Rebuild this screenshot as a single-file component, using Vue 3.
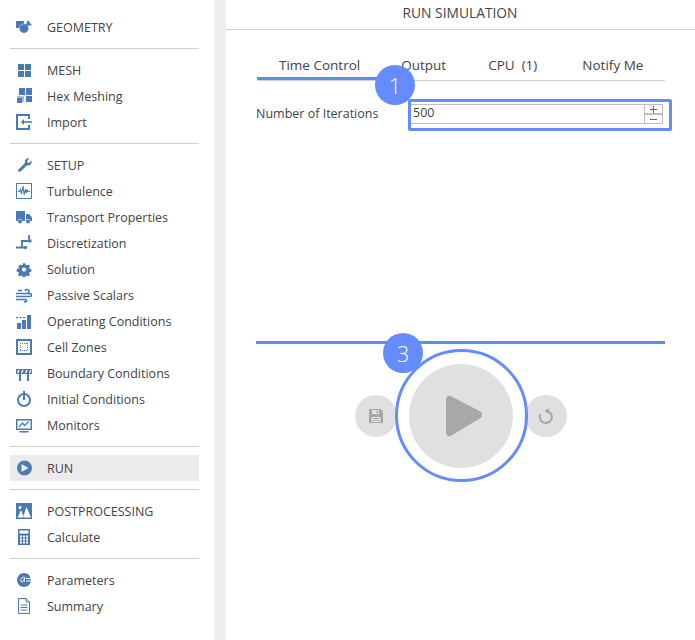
<script setup>
const sections = [
  [{ label: 'GEOMETRY', icon: 'geometry' }],
  [
    { label: 'MESH', icon: 'mesh' },
    { label: 'Hex Meshing', icon: 'hex' },
    { label: 'Import', icon: 'import' }
  ],
  [
    { label: 'SETUP', icon: 'wrench' },
    { label: 'Turbulence', icon: 'turbulence' },
    { label: 'Transport Properties', icon: 'truck' },
    { label: 'Discretization', icon: 'discretization' },
    { label: 'Solution', icon: 'gear' },
    { label: 'Passive Scalars', icon: 'wind' },
    { label: 'Operating Conditions', icon: 'operating' },
    { label: 'Cell Zones', icon: 'cells' },
    { label: 'Boundary Conditions', icon: 'barrier' },
    { label: 'Initial Conditions', icon: 'timer' },
    { label: 'Monitors', icon: 'monitor' }
  ],
  [{ label: 'RUN', icon: 'run', active: true }],
  [
    { label: 'POSTPROCESSING', icon: 'post' },
    { label: 'Calculate', icon: 'calc' }
  ],
  [
    { label: 'Parameters', icon: 'params' },
    { label: 'Summary', icon: 'summary' }
  ]
]

const tabs = ['Time Control', 'Output', 'CPU\u00a0 (1)', 'Notify Me']
</script>

<template>
<div class="app">
  <aside class="sidebar">
    <div v-for="(section, i) in sections" :key="i" class="section">
      <div
        v-for="item in section"
        :key="item.label"
        class="item"
        :class="{ 'item-active': item.active }"
      >
        <svg class="item-icon" viewBox="0 0 16 16" fill="#4a7ab5">
          <template v-if="item.icon === 'geometry'">
            <rect x="0" y="2" width="8" height="7" />
            <circle cx="8" cy="9.500" r="4.700" stroke="#fff" stroke-width=".4" />
            <path d="M12 1l4 5.500H9.500z" />
          </template>
          <template v-else-if="item.icon === 'mesh'">
            <rect x="2" y="2" width="6" height="6" />
            <rect x="9" y="2" width="6" height="6" />
            <rect x="2" y="9" width="6" height="6" />
            <rect x="9" y="9" width="6" height="6" />
          </template>
          <template v-else-if="item.icon === 'hex'">
            <rect x="3" y="0" width="6" height="7" />
            <rect x="10" y="0" width="6" height="7" />
            <rect x="10" y="8" width="6" height="6" />
            <rect x="1" y="10" width="5" height="5" />
            <path d="M1 8.500h6.500V14H6.500V9.500H1z" />
          </template>
          <template v-else-if="item.icon === 'import'">
            <path d="M0 0h14v5h-2V2H2v12h10v-3h2v5H0z" />
            <path d="M16 7.200H8V5L5 8l3 3V8.800h8z" />
          </template>
          <template v-else-if="item.icon === 'wrench'">
            <path d="M15 2.500 12.500 5 11 4.500 10.500 3 13 .500C10.800-.2 8.500 1.200 8.300 3.500c0 .6 0 1.100.2 1.600L2 11.500c-1.200 1.200.6 3.200 2 2l6.500-6.300c2.700.9 5.400-1.800 4.500-4.700z" transform="translate(.5 1)" />
          </template>
          <template v-else-if="item.icon === 'turbulence'">
            <path d="M0 0h16v16H0zm1 1v14h14V1z" fill-rule="evenodd" />
            <path d="M2 8.500h1.500l1-2 1 4.500 1.500-8 1.200 9 1.300-6 .8 4 .9-3 .8 1.500H14" fill="none" stroke="#4a7ab5" stroke-width="1.100" />
          </template>
          <template v-else-if="item.icon === 'truck'">
            <path d="M0 3a1 1 0 0 1 1-1h8v10H0zM10 5h3l3 3.500V12h-6z" />
            <circle cx="4" cy="12.500" r="2.300" stroke="#fff" stroke-width=".6" />
            <circle cx="12" cy="12.500" r="2.300" stroke="#fff" stroke-width=".6" />
          </template>
          <template v-else-if="item.icon === 'discretization'">
            <path d="M13 0v6H6v6.500H0" fill="none" stroke="#4a7ab5" stroke-width="1.800" />
            <circle cx="14" cy="6" r="1.700" />
            <circle cx="6" cy="6" r="1.300" />
            <circle cx="9.500" cy="12.500" r="1.700" />
            <path d="M6 12.500h3" stroke="#4a7ab5" stroke-width="1.800" />
          </template>
          <template v-else-if="item.icon === 'gear'">
            <path d="M6.500 1h3l.4 2 1.400.6 1.800-1.100 2 2-1.100 1.800.6 1.400 2 .4v3l-2 .4-.6 1.400 1.100 1.800-2 2-1.800-1.100-1.400.6-.4 2h-3l-.4-2-1.400-.6-1.800 1.100-2-2 1.100-1.800-.6-1.400-2-.4v-3l2-.4.6-1.400L1.400 4.500l2-2 1.800 1.100 1.400-.6zM8 6a2.500 2.500 0 1 0 0 5 2.500 2.500 0 0 0 0-5z" fill-rule="evenodd" transform="translate(1.200 1.300) scale(.85)" />
          </template>
          <template v-else-if="item.icon === 'wind'">
            <path d="M0 6.500h11a2 2 0 1 0-2-2.500M0 9.500h14a1.500 1.500 0 1 0-1.500-2M0 12.500h9.500a1.200 1.200 0 1 1-1.200 1.500M2 3.500h4" fill="none" stroke="#4a7ab5" stroke-width="1.700" />
          </template>
          <template v-else-if="item.icon === 'operating'">
            <path d="M0 4h2v1.300H0zM3.500 4h2v1.300h-2zM7 4h2v1.300H7z" />
            <rect x="1" y="10" width="4" height="6" />
            <rect x="6" y="7" width="4" height="9" />
            <rect x="11" y="2" width="4" height="14" />
          </template>
          <template v-else-if="item.icon === 'cells'">
            <path d="M0 0h16v16H0zm2 2v12h12V2z" fill-rule="evenodd" />
            <path d="M4 4.500h8M4 11.500h8M4.500 4v8M11.500 4v8" fill="none" stroke="#4a7ab5" stroke-width="1" stroke-dasharray="1 1" />
          </template>
          <template v-else-if="item.icon === 'barrier'">
            <path d="M0 4h16v5H0z" />
            <path d="M3 5 1.500 8M7 5 5.500 8M11 5 9.500 8M15 5l-1.500 3" stroke="#fff" stroke-width="1.300" fill="none" />
            <rect x="3" y="9" width="2" height="7" />
            <rect x="11" y="9" width="2" height="7" />
          </template>
          <template v-else-if="item.icon === 'timer'">
            <circle cx="8" cy="9" r="6" fill="none" stroke="#4a7ab5" stroke-width="2" />
            <rect x="7" y="0" width="2" height="9" />
          </template>
          <template v-else-if="item.icon === 'monitor'">
            <path d="M0 2h16v11H0zm1.500 1.500v8h13v-8z" fill-rule="evenodd" />
            <path d="M3 10 6.500 6l2 2.500L13 4.500" fill="none" stroke="#4a7ab5" stroke-width="1.300" />
            <rect x="3.500" y="14" width="9" height="1.500" />
          </template>
          <template v-else-if="item.icon === 'run'">
            <path d="M8.500 .500a7.500 7.500 0 1 1 0 15 7.500 7.500 0 0 1 0-15zM5.500 4v8L12.500 8z" fill-rule="evenodd" />
          </template>
          <template v-else-if="item.icon === 'post'">
            <path d="M0 0h16v16H0zm4 3a1.500 1.500 0 1 0 0 3 1.500 1.500 0 0 0 0-3zM1.500 14.500h6.500L5 7zm5.500 0h8L10.500 4z" fill-rule="evenodd" />
          </template>
          <template v-else-if="item.icon === 'calc'">
            <path d="M2 0h12v16H2zm1.500 1.500v3h9v-3zM4 6.500v2h2v-2zm3 0v2h2v-2zm3 0v2h2v-2zM4 9.500v2h2v-2zm3 0v2h2v-2zm3 0v2h2v-2zm-6 3v2h2v-2zm3 0v2h2v-2zm3 0v2h2v-2z" fill-rule="evenodd" />
          </template>
          <template v-else-if="item.icon === 'params'">
            <circle cx="8" cy="8" r="7" />
            <path d="M8.700 5.500c-3-1.500-4.800 3-3.300 4.500 1.200.8 2.500-1 3.300-4.500-.5 2-.8 4 0 4.500" fill="none" stroke="#fff" stroke-width="1" />
            <path d="M10 6.500h6M10 9h6" stroke="#fff" stroke-width="1" />
          </template>
          <template v-else-if="item.icon === 'summary'">
            <path d="M2.500 .500H10l3.500 3.500v11.500h-11zM10 .500V4h3.500" fill="none" stroke="#4a7ab5" stroke-width="1" />
            <path d="M4.500 7h7M4.500 9.500h7M4.500 12h7" stroke="#4a7ab5" stroke-width="1" />
          </template>
        </svg>
        <span>{{ item.label }}</span>
      </div>
    </div>
  </aside>

  <div class="gutter"></div>

  <main class="main">
    <header class="title">RUN SIMULATION</header>
    <div class="content">
      <div class="tabs">
        <div
          v-for="(tab, i) in tabs"
          :key="tab"
          class="tab"
          :class="{ 'tab-active': i === 0, 'tab-last': i === tabs.length - 1 }"
        >{{ tab }}</div>
        <div class="badge badge-one">1</div>
      </div>
      <div class="field">
        <label>Number of Iterations</label>
        <div class="input">
          <span class="input-value">500</span>
          <div class="spinner">
            <div class="spin-cell">
              <svg viewBox="0 0 7 7" width="7" height="7"><path d="M0 3.500h7M3.500 0v7" stroke="#666" stroke-width="1" /></svg>
            </div>
            <div class="spin-cell">
              <svg viewBox="0 0 7 7" width="7" height="7"><path d="M0 3.500h7" stroke="#666" stroke-width="1" /></svg>
            </div>
          </div>
          <div class="highlight"></div>
        </div>
      </div>
      <div class="actions">
        <div class="badge badge-three">3</div>
        <div class="buttons">
          <button class="round-btn">
            <svg viewBox="0 0 16 16" width="16" height="16" fill="#a8a8a8">
              <path d="M1 1h11.500L15 3.500V15H1zM4 2v4h7V2zm4.500.700h1.500v2.500H8.500zM3.500 9v5h9V9zm1.300 1.300h6.400v.8H4.800zm0 1.700h6.400v.8H4.800z" fill-rule="evenodd" />
            </svg>
          </button>
          <div class="play-wrap">
            <button class="play-btn">
              <svg viewBox="0 0 38 42" width="38" height="42" fill="#a8a8a8">
                <path d="M1 4.500C1 1.500 3.500 0 6 1.200l29 15c2.800 1.500 2.800 5.500 0 7L6 40.800C3.500 42 1 40.500 1 37.500z" />
              </svg>
            </button>
          </div>
          <button class="round-btn">
            <svg viewBox="0 0 16 16" width="16" height="16" fill="none">
              <path d="M2.600 6A6 6 0 1 0 9.500 3.200" stroke="#a8a8a8" stroke-width="2" />
              <path d="M11 0v6L6.500 3z" fill="#a8a8a8" />
            </svg>
          </button>
        </div>
      </div>
    </div>
  </main>
</div>
</template>

<style>
html, body {
  margin: 0;
  background: #fff;
}
</style>

<style scoped>
.app {
  display: flex;
  height: 640px;
  font-family: "Open Sans", sans-serif;
  font-size: 12.5px;
  color: #444;
}

.sidebar {
  width: 214px;
  box-sizing: border-box;
  padding: 14px 15px 0 10px;
  flex-shrink: 0;
}
.section {
  padding-bottom: 8px;
  margin-bottom: 8px;
  border-bottom: 1px solid #cfcfcf;
}
.section:last-child {
  border-bottom: 0;
}
.item {
  display: flex;
  align-items: center;
  height: 26px;
  padding-left: 6px;
}
.item-active {
  background-color: #ebebeb;
}
.item-icon {
  width: 16px;
  height: 16px;
  margin-right: 15px;
  flex-shrink: 0;
}

.gutter {
  width: 12px;
  background-color: #efefef;
  flex-shrink: 0;
}

.main {
  flex: 1;
  display: flex;
  flex-direction: column;
}
.title {
  height: 29px;
  border-bottom: 1px solid #cfcfcf;
  text-align: center;
  font-size: 13.8px;
  line-height: 26px;
  padding-right: 1px;
}
.content {
  padding: 20px 30px 0;
}

.tabs {
  position: relative;
  display: flex;
  height: 30px;
  width: 408px;
  margin-left: 1px;
  border-bottom: 1px solid #cfcfcf;
}
.tab {
  padding: 6px 21px 0;
  font-size: 13.5px;
  line-height: 18px;
  white-space: nowrap;
  box-sizing: border-box;
  height: 30px;
  flex-shrink: 0;
}
.tab:first-child {
  padding-left: 22px;
  padding-right: 20px;
}
.tab-last {
  padding-left: 24px;
  padding-right: 18px;
}
.tab-active {
  border-bottom: 3px solid #5b8def;
}

.badge {
  position: absolute;
  width: 40px;
  height: 40px;
  border-radius: 50%;
  background-color: #648cff;
  color: #fff;
  font-size: 22px;
  font-weight: 300;
  line-height: 40px;
  text-align: center;
  z-index: 2;
}
.badge-one {
  left: 118px;
  top: 15px;
}
.badge-three {
  left: 127px;
  top: -11px;
}

.field {
  display: flex;
  align-items: center;
  margin-top: 23px;
  height: 20px;
}
.field label {
  width: 154px;
  white-space: nowrap;
  margin-bottom: 2px;
}
.input {
  position: relative;
  width: 253px;
  height: 20px;
  box-sizing: border-box;
  border-top: 1px solid #bdbdbd;
  border-bottom: 1px solid #bdbdbd;
  border-right: 1px solid #bdbdbd;
  display: flex;
  justify-content: space-between;
}
.input-value {
  line-height: 16px;
  padding-left: 3px;
}
.spinner {
  width: 17px;
  display: flex;
  flex-direction: column;
  border-left: 1px solid #bdbdbd;
}
.spin-cell {
  flex: 1;
  display: flex;
  align-items: center;
  justify-content: center;
}
.spin-cell:first-child {
  border-bottom: 2px solid #bdbdbd;
}
.highlight {
  position: absolute;
  left: -2px;
  right: -10px;
  top: -6px;
  bottom: -8px;
  border: 3px solid #648cff;
  border-radius: 2px;
}

.actions {
  position: relative;
  margin-top: 217px;
  border-top: 3px solid #5b8def;
  width: 409px;
}
.buttons {
  display: flex;
  justify-content: center;
  align-items: center;
  gap: 12px;
  margin-top: 20px;
}
.round-btn {
  width: 42px;
  height: 42px;
  border: 0;
  padding: 0;
  border-radius: 50%;
  background-color: #e0e0e0;
  display: flex;
  align-items: center;
  justify-content: center;
}
.play-wrap {
  position: relative;
  width: 104px;
  height: 104px;
}
.play-wrap::before {
  content: "";
  position: absolute;
  left: -14px;
  top: -15px;
  width: 133px;
  height: 133px;
  box-sizing: border-box;
  border: 3px solid #648cff;
  border-radius: 50%;
}
.play-btn {
  position: relative;
  width: 104px;
  height: 104px;
  border: 0;
  padding: 0 0 0 7px;
  border-radius: 50%;
  background-color: #e0e0e0;
  display: flex;
  align-items: center;
  justify-content: center;
}
</style>
